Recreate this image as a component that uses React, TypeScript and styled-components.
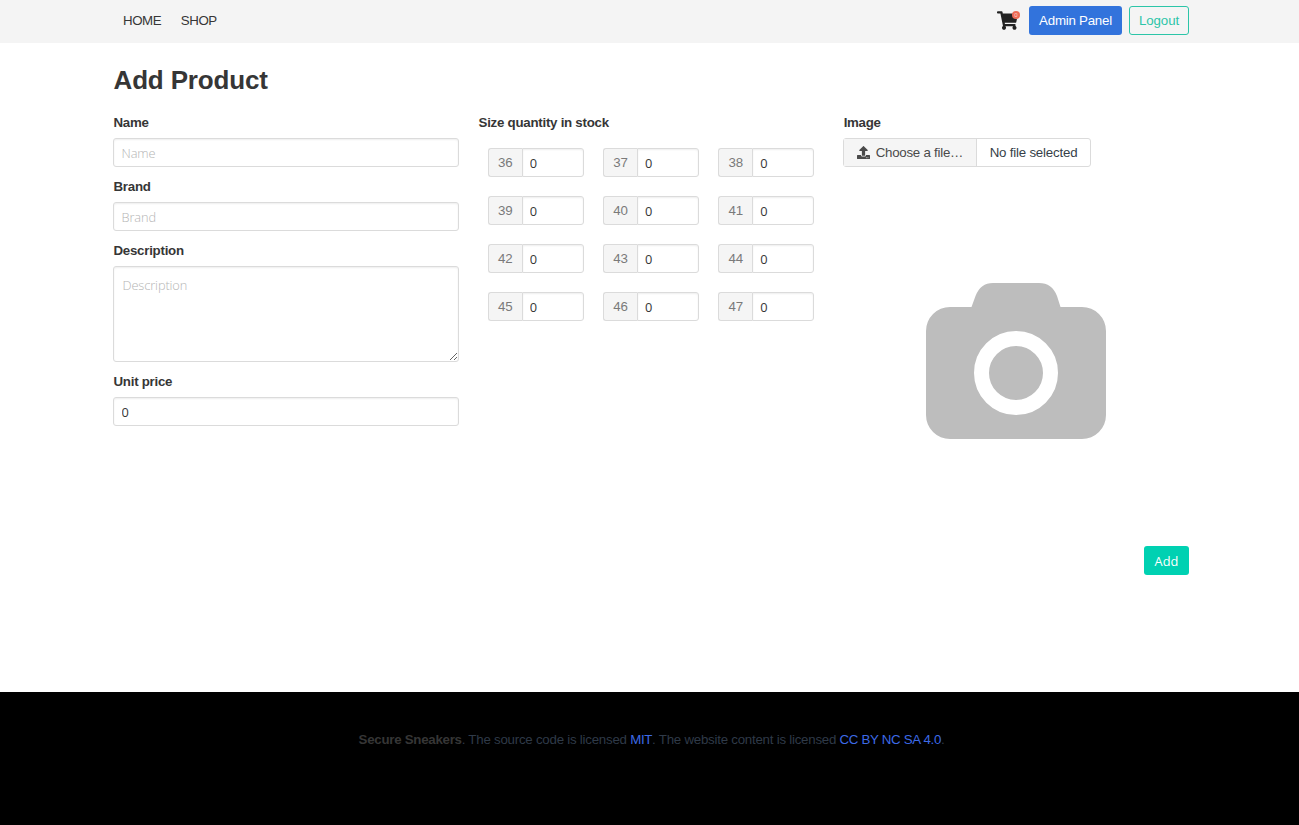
import React from "react";
import styled, { createGlobalStyle, css } from "styled-components";
import { FaShoppingCart, FaUpload } from "react-icons/fa";

const GlobalStyle = createGlobalStyle`
  *, *::before, *::after { box-sizing: border-box; }
  html { font-size: 12.8px; }
  body {
    margin: 0;
    background: #fff;
    color: #4a4a4a;
    font: 400 13.3px/19.2px "Liberation Sans", Arial, sans-serif;
  }
`;

const Page = styled.div`
  display: flex;
  flex-direction: column;
  min-height: 100vh;
`;

const NavBar = styled.header`
  height: 43px;
  background: #f4f4f4;
`;

const Container = styled.div`
  width: 1076px;
  margin-left: 113px;
`;

const NavInner = styled(Container)`
  display: flex;
  align-items: center;
  height: 41px;
`;

const NavLink = styled.a`
  margin-left: 10px;
  margin-right: 9.6px;
  color: #363636;
  letter-spacing: -0.42px;
`;

const NavActions = styled.div`
  display: flex;
  align-items: center;
  margin-left: auto;
`;

const Cart = styled.div`
  position: relative;
  display: flex;
  width: 23px;
  height: 22px;
  margin-right: 9px;
  color: #222;
`;

const CartCount = styled.span`
  position: absolute;
  top: 1px;
  right: 0;
  width: 8px;
  height: 8px;
  border-radius: 50%;
  background: #ec6a55;
  color: #fbd0c8;
  font-size: 6px;
  line-height: 8px;
  text-align: center;
`;

const Button = styled.button<{ $kind: "link" | "outlined" | "primary"; $width: number }>`
  width: ${(p) => p.$width}px;
  height: 29px;
  padding: 0;
  border: 1px solid transparent;
  border-radius: 3px;
  font: 400 13.3px/19.2px "Liberation Sans", Arial, sans-serif;
  color: #fff;
  ${(p) => p.$kind === "link" && css`
    background: #3273dc;
    letter-spacing: -0.24px;
  `}
  ${(p) => p.$kind === "outlined" && css`
    margin-left: 7px;
    border-color: #2cc5a8;
    background: transparent;
    color: #2cc5a8;
    letter-spacing: -0.07px;
  `}
  ${(p) => p.$kind === "primary" && css`
    padding-top: 2px;
    background: #00d1b2;
    font-size: 1rem;
    font-family: "Open Sans", sans-serif;
  `}
`;

const Main = styled.main`
  flex: 1 0 649px;
`;

const Title = styled.h1`
  margin: 0;
  padding-top: 22px;
  padding-left: 0.5px;
  color: #363636;
  font-size: 26px;
  font-weight: 700;
  line-height: 30px;
  letter-spacing: -0.15px;
`;

const Columns = styled.div`
  display: grid;
  grid-template-columns: repeat(3, 1fr);
  column-gap: 19.2px;
  padding-top: 17.6px;
`;

const Column = styled.section`
  min-width: 0;
`;

const Field = styled.div`
  margin-bottom: 9.6px;
`;

const Label = styled.label`
  display: block;
  margin-bottom: 6.4px;
  padding-left: 0.5px;
  color: #363636;
  font-weight: 700;
  letter-spacing: -0.26px;
`;

const control = css`
  display: block;
  width: 100%;
  border: 1px solid #dbdbdb;
  border-radius: 3px;
  background: #fff;
  box-shadow: inset 0 1px 2px rgba(10, 10, 10, 0.07);
  color: #363636;
  font: 400 1rem/1.5 "Open Sans", sans-serif;
  outline: none;
  &::placeholder { color: #b4b4b4; opacity: 1; font-weight: 300; letter-spacing: -0.1px; }
`;

const Input = styled.input`
  ${control}
  height: 28.8px;
  padding: 2px 7.5px;
`;

const TextArea = styled.textarea`
  ${control}
  height: 96px;
  padding: 9px 8.5px 8px;
  resize: vertical;
`;

const SizeGrid = styled.div`
  display: grid;
  grid-template-columns: repeat(3, 1fr);
  gap: 19.2px;
  padding: 9.6px 9.6px 0;
`;

const SizeField = styled.div`
  display: flex;
`;

const SizeTag = styled.span`
  flex: none;
  width: 34px;
  height: 28.8px;
  border: 1px solid #dbdbdb;
  border-right: 0;
  border-radius: 3px 0 0 3px;
  background: #f5f5f5;
  color: #7a7a7a;
  line-height: 27px;
  text-align: center;
  letter-spacing: -0.2px;
`;

const SizeInput = styled(Input)`
  flex: 1;
  min-width: 0;
  padding: 3px 7px 1px;
  border-radius: 0 3px 3px 0;
`;

const FilePicker = styled.div`
  display: flex;
  width: 248px;
  height: 28.8px;
  border: 1px solid #dbdbdb;
  border-radius: 3px;
  line-height: 27px;
  white-space: nowrap;
`;

const FileCta = styled.span`
  display: flex;
  align-items: center;
  width: 133px;
  padding-left: 12.5px;
  border-right: 1px solid #dbdbdb;
  background: #f5f5f5;
  color: #4a4a4a;
  letter-spacing: -0.24px;
  svg { margin-right: 6px; }
`;

const FileName = styled.span`
  padding-left: 12.5px;
  color: #363f48;
  letter-spacing: -0.2px;
`;

const Preview = styled.div`
  display: flex;
  justify-content: center;
  padding-top: 116px;
  svg { display: block; }
`;

const FormActions = styled.div`
  display: flex;
  justify-content: flex-end;
  padding-top: 107px;
`;

const Footer = styled.footer`
  flex: none;
  height: 133px;
  padding-top: 38px;
  background: #000;
  color: #2f3a48;
  text-align: center;
  white-space: nowrap;
  strong { color: #363636; letter-spacing: -0.27px; }
  a { color: #3d6ae6; letter-spacing: -0.32px; }
`;

const FooterText = styled.p`
  margin: 0;
  padding-left: 4px;
  letter-spacing: -0.24px;
`;

const sizes = [36, 37, 38, 39, 40, 41, 42, 43, 44, 45, 46, 47];

const CameraIcon = () => (
  <svg width="180" height="156" viewBox="0 0 180 156">
    <path
      fill="#bdbdbd"
      d="M24 24H45.500L49.500 13Q54.500 0 67 0H113Q126 0 131 13L134.500 24H156A24 24 0 0 1 180 48V132A24 24 0 0 1 156 156H24A24 24 0 0 1 0 132V48A24 24 0 0 1 24 24Z"
    />
    <circle cx="90" cy="90" r="34.500" fill="#bdbdbd" stroke="#fff" strokeWidth="15" />
  </svg>
);

export default function App() {
  return (
    <Page>
      <GlobalStyle />
      <NavBar>
        <NavInner>
          <NavLink>HOME</NavLink>
          <NavLink>SHOP</NavLink>
          <NavActions>
            <Cart>
              <FaShoppingCart size={21} />
              <CartCount>0</CartCount>
            </Cart>
            <Button $kind="link" $width={93}>Admin Panel</Button>
            <Button $kind="outlined" $width={60}>Logout</Button>
          </NavActions>
        </NavInner>
      </NavBar>
      <Main>
        <Container>
          <Title>Add Product</Title>
          <Columns>
            <Column>
              <Field>
                <Label>Name</Label>
                <Input placeholder="Name" />
              </Field>
              <Field>
                <Label>Brand</Label>
                <Input placeholder="Brand" />
              </Field>
              <Field>
                <Label>Description</Label>
                <TextArea placeholder="Description" />
              </Field>
              <Field>
                <Label>Unit price</Label>
                <Input defaultValue="0" />
              </Field>
            </Column>
            <Column>
              <Label>Size quantity in stock</Label>
              <SizeGrid>
                {sizes.map((size) => (
                  <SizeField key={size}>
                    <SizeTag>{size}</SizeTag>
                    <SizeInput defaultValue="0" />
                  </SizeField>
                ))}
              </SizeGrid>
            </Column>
            <Column>
              <Label>Image</Label>
              <FilePicker>
                <FileCta>
                  <FaUpload size={13} />
                  Choose a file…
                </FileCta>
                <FileName>No file selected</FileName>
              </FilePicker>
              <Preview>
                <CameraIcon />
              </Preview>
              <FormActions>
                <Button $kind="primary" $width={45}>Add</Button>
              </FormActions>
            </Column>
          </Columns>
        </Container>
      </Main>
      <Footer>
        <FooterText>
          <strong>Secure Sneakers</strong>. The source code is licensed <a>MIT</a>. The website
          content is licensed <a>CC BY NC SA 4.0</a>.
        </FooterText>
      </Footer>
    </Page>
  );
}
